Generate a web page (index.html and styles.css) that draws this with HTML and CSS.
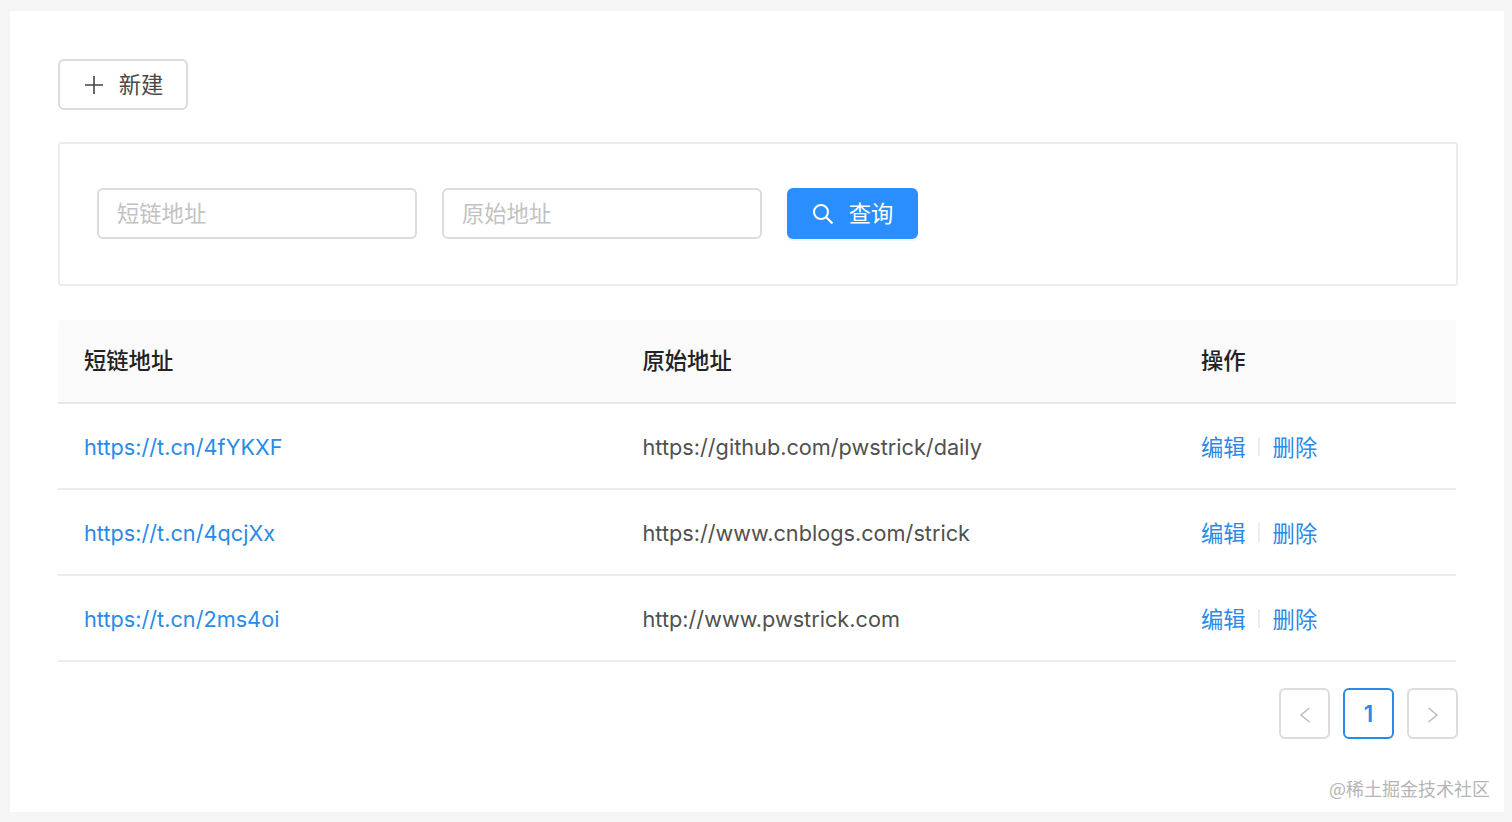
FILE: index.html
```html
<!DOCTYPE html>
<html lang="zh-CN">
<head>
<meta charset="utf-8">
<title>短链地址</title>
<link rel="stylesheet" href="styles.css">
</head>
<body>
<main class="card">
  <button class="btn btn-default" type="button">
    <svg class="icon" viewBox="0 0 20 20" width="20" height="20"><path d="M10 1v18M1 10h18" fill="none" stroke="#444" stroke-width="1.6"/></svg>
    <span class="btn-label">新建</span>
  </button>
  <form class="search">
    <input class="input" type="text" placeholder="短链地址">
    <input class="input" type="text" placeholder="原始地址">
    <button class="btn btn-primary" type="button">
      <svg class="icon" viewBox="0 0 22 22" width="22" height="22"><circle cx="9" cy="9" r="7" fill="none" stroke="#fff" stroke-width="2"/><path d="M14 14l6.500 6.500" fill="none" stroke="#fff" stroke-width="2.200"/></svg>
      <span class="btn-label">查询</span>
    </button>
  </form>
  <div class="table">
    <div class="row head">
      <div class="cell">短链地址</div>
      <div class="cell">原始地址</div>
      <div class="cell">操作</div>
    </div>
    <div class="row">
      <div class="cell latin"><a class="link" href="#">https://t.cn/4fYKXF</a></div>
      <div class="cell latin">https://github.com/pwstrick/daily</div>
      <div class="cell actions"><a class="link" href="#">编辑</a><i class="divider"></i><a class="link" href="#">删除</a></div>
    </div>
    <div class="row">
      <div class="cell latin"><a class="link" href="#">https://t.cn/4qcjXx</a></div>
      <div class="cell latin">https://www.cnblogs.com/strick</div>
      <div class="cell actions"><a class="link" href="#">编辑</a><i class="divider"></i><a class="link" href="#">删除</a></div>
    </div>
    <div class="row">
      <div class="cell latin"><a class="link" href="#">https://t.cn/2ms4oi</a></div>
      <div class="cell latin">http://www.pwstrick.com</div>
      <div class="cell actions"><a class="link" href="#">编辑</a><i class="divider"></i><a class="link" href="#">删除</a></div>
    </div>
  </div>
  <nav class="pager">
    <span class="page"><svg class="chevron" viewBox="0 0 12 16" width="12" height="16"><path d="M10.500 1L2 8l8.500 7" fill="none" stroke="#bbb" stroke-width="1.500"/></svg></span>
    <span class="page current">1</span>
    <span class="page"><svg class="chevron" viewBox="0 0 12 16" width="12" height="16"><path d="M1.500 1L10 8l-8.500 7" fill="none" stroke="#bbb" stroke-width="1.500"/></svg></span>
  </nav>
</main>
<div class="watermark">@稀土掘金技术社区</div>
</body>
</html>
```
FILE: styles.css
```css
* { box-sizing: border-box; }
html, body { height: 100%; }
body {
  margin: 0;
  padding: 11px 8px 10px 10px;
  background: #f5f5f5;
  color: #505050;
  font-family: "Noto Sans CJK SC", Inter, sans-serif;
  font-size: 22.300px;
  overflow: hidden;
}
.card {
  height: 801px;
  padding: 48px 46px 0 48px;
  background: #fff;
}
.btn {
  display: flex;
  align-items: center;
  justify-content: center;
  gap: 15px;
  width: 130px;
  height: 51px;
  padding: 0;
  border-radius: 6px;
  font: inherit;
}
.btn-label { margin-bottom: 4px; }
.btn-default { border: 2px solid #dcdcdc; background: #fff; color: #4a4a4a; }
.btn-default .icon { margin-left: 1px; }
.btn-primary { flex: none; border: 0; width: 131px; background: #2b8eff; color: #fff; box-shadow: 0 2px 1px #eef6ff; }
.search {
  display: flex;
  align-items: center;
  gap: 25px;
  height: 144px;
  margin-top: 32px;
  padding: 0 37px 1px;
  border: 2px solid #ececec;
  border-radius: 3px;
}
.input {
  flex: none;
  width: 320px;
  height: 51px;
  padding: 0 18px 4px;
  border: 2px solid #dcdcdc;
  border-radius: 6px;
  font: inherit;
  color: #4a4a4a;
  background: #fff;
  outline: 0;
}
.input::placeholder { color: #c2c2c2; }
.table { width: 1398px; margin-top: 34px; }
.row {
  display: grid;
  grid-template-columns: 558.500px 558.500px 281px;
  align-items: center;
  height: 86px;
  border-bottom: 2px solid #ececec;
}
.head {
  height: 84px;
  background: #fafafa;
  border-bottom-color: #e6e6e6;
  border-radius: 3px 3px 0 0;
  color: #222;
  font-weight: 500;
}
.cell { padding: 0 26px; white-space: nowrap; }
.head .cell { padding-bottom: 4px; }
.latin { padding-top: 2px; font-family: Inter, sans-serif; font-size: 21.700px; }
.link { color: #2a8ae8; text-decoration: none; }
.actions { display: flex; align-items: center; }
.divider { width: 2px; height: 19px; margin: 0 13px 0 12px; background: #ececec; }
.pager {
  display: flex;
  justify-content: flex-end;
  gap: 13px;
  margin-top: 26px;
}
.page {
  display: flex;
  align-items: center;
  justify-content: center;
  width: 51px;
  height: 51px;
  border: 2px solid #dcdcdc;
  border-radius: 6px;
  font-family: Inter, sans-serif;
  font-weight: 600;
}
.chevron { margin-top: 2px; }
.current { border-color: #2a8ae8; color: #2a8ae8; }
.watermark {
  position: absolute;
  left: 1329px;
  top: 775px;
  color: #b5b5b5;
  font-size: 18px;
  line-height: 26px;
  white-space: nowrap;
}
```
